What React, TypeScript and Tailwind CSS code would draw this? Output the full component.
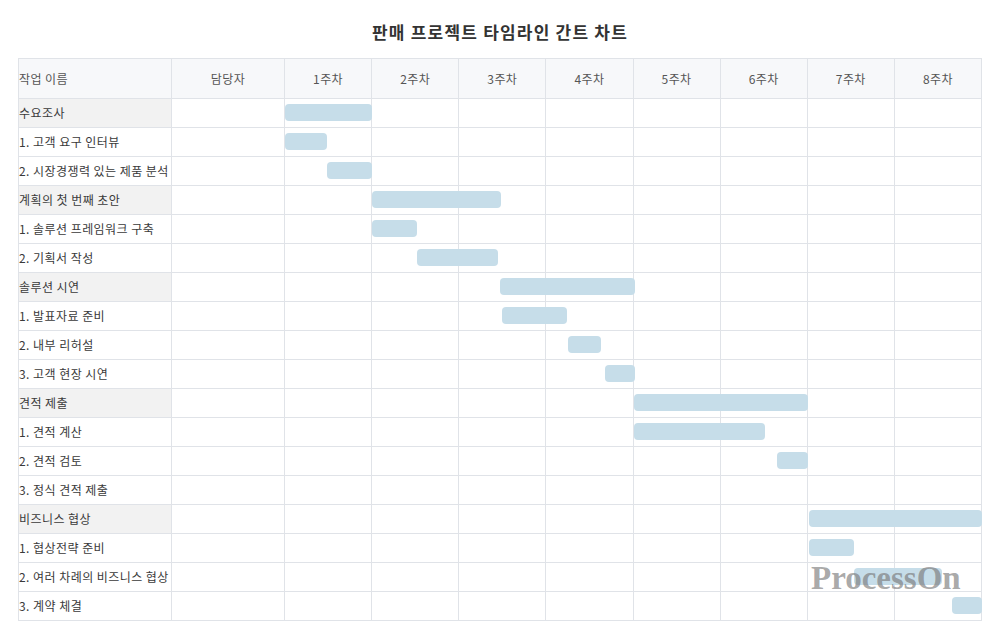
// Sales project timeline Gantt chart (판매 프로젝트 타임라인 간트 차트).
// Fixed-width table: task name, assignee, then 8 weekly columns. Bars are placed
// by pixel offset inside the week area, taken from the data below.

import React from 'react';

type Task = {
  name: string;
  group?: boolean;
  bar?: { left: number; width: number };
};

const WEEKS = ['1주차', '2주차', '3주차', '4주차', '5주차', '6주차', '7주차', '8주차'];

const TASKS: Task[] = [
  { name: '수요조사', group: true, bar: { left: 0, width: 87 } },
  { name: '1. 고객 요구 인터뷰', bar: { left: 0, width: 42 } },
  { name: '2. 시장경쟁력 있는 제품 분석', bar: { left: 42, width: 45 } },
  { name: '계획의 첫 번째 초안', group: true, bar: { left: 87, width: 129 } },
  { name: '1. 솔루션 프레임워크 구축', bar: { left: 87, width: 45 } },
  { name: '2. 기획서 작성', bar: { left: 132, width: 81 } },
  { name: '솔루션 시연', group: true, bar: { left: 215, width: 135 } },
  { name: '1. 발표자료 준비', bar: { left: 217, width: 65 } },
  { name: '2. 내부 리허설', bar: { left: 283, width: 33 } },
  { name: '3. 고객 현장 시연', bar: { left: 320, width: 30 } },
  { name: '견적 제출', group: true, bar: { left: 349, width: 174 } },
  { name: '1. 견적 계산', bar: { left: 349, width: 131 } },
  { name: '2. 견적 검토', bar: { left: 492, width: 31 } },
  { name: '3. 정식 견적 제출' },
  { name: '비즈니스 협상', group: true, bar: { left: 524, width: 173 } },
  { name: '1. 협상전략 준비', bar: { left: 524, width: 45 } },
  { name: '2. 여러 차례의 비즈니스 협상', bar: { left: 569, width: 88 } },
  { name: '3. 계약 체결', bar: { left: 667, width: 30 } },
];

function WeekCells({ header }: { header?: boolean }) {
  return (
    <div className="grid h-full grid-cols-[repeat(8,87.125px)]">
      {WEEKS.map((w) => (
        <div
          key={w}
          className="flex items-center justify-center border-r border-b border-[#e0e3e8]"
        >
          {header ? w : null}
        </div>
      ))}
    </div>
  );
}

export default function App() {
  return (
    <div className="relative h-[639px] w-[1000px] overflow-hidden bg-white font-['Noto_Sans_CJK_KR','Noto_Sans',sans-serif] text-[12px] tracking-[0.45px] text-[#3a3a3a]">
      <h1 className="pt-[22px] text-center text-[17px] font-bold leading-[20px] tracking-[1.2px] text-[#333]">
        판매 프로젝트 타임라인 간트 차트
      </h1>

      <div className="mt-[16px] ml-[18px] w-[964px] border-t border-l border-[#e0e3e8]">
        {/* header */}
        <div className="flex h-[40px] bg-[#f7f8fa] text-[#555]">
          <div className="flex w-[153px] items-center border-r border-b border-[#e0e3e8]">
            작업 이름
          </div>
          <div className="flex w-[113px] items-center justify-center border-r border-b border-[#e0e3e8]">
            담당자
          </div>
          <div className="w-[697px]">
            <WeekCells header />
          </div>
        </div>

        {TASKS.map((t) => (
          <div key={t.name} className="flex h-[29px]">
            <div
              className={`flex w-[153px] items-center whitespace-nowrap border-r border-b border-[#e0e3e8] ${
                t.group ? 'bg-[#f2f2f2]' : 'bg-white'
              }`}
            >
              {t.name}
            </div>
            <div className="w-[113px] border-r border-b border-[#e0e3e8]" />
            <div className="relative w-[697px]">
              <WeekCells />
              {t.bar && (
                <div
                  className="absolute top-[5px] h-[17px] rounded-[4px] bg-[#c6dde9]"
                  style={{ left: t.bar.left, width: t.bar.width }}
                />
              )}
            </div>
          </div>
        ))}
      </div>

      {/* watermark */}
      <div className="pointer-events-none absolute top-[562px] left-[811px] font-['Liberation_Serif',serif] text-[33px] leading-none font-bold tracking-normal text-[rgba(120,120,120,0.65)]">
        ProcessOn
      </div>
    </div>
  );
}
